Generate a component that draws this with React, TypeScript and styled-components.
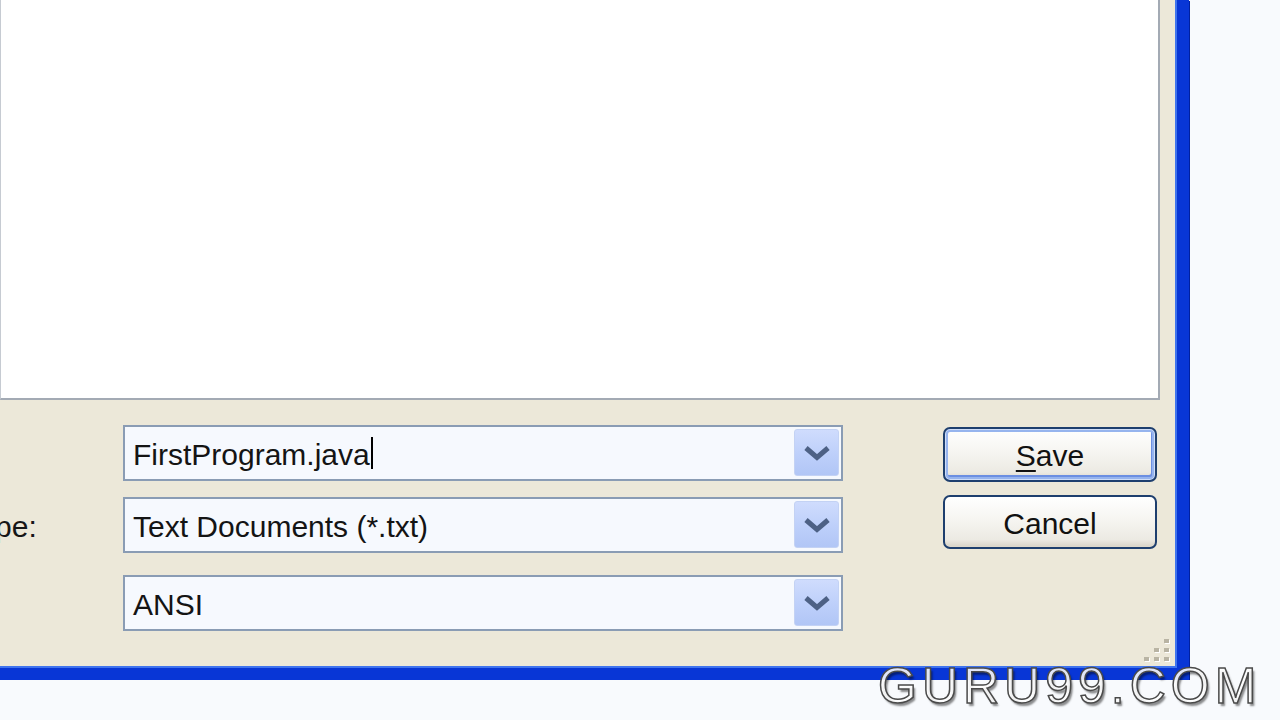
import React from 'react';
import styled, { createGlobalStyle } from 'styled-components';

interface ComboProps {
	value: string;
	caret?: boolean;
}

const Chevron: React.FunctionComponent = () => (
	<svg width={28} height={16} viewBox='0 0 28 16' aria-hidden>
		<path d='M3 3 L14 12.5 L25 3' fill='none' stroke='#4D6185' strokeWidth={5} strokeLinejoin='miter' />
	</svg>
);

const Combo: React.FunctionComponent<ComboProps> = ({ value, caret }) => (
	<ComboBox>
		<ComboText>
			{value}
			{caret && <Caret />}
		</ComboText>
		<DropButton>
			<Chevron />
		</DropButton>
	</ComboBox>
);

const Grip: React.FunctionComponent = () => {
	// bottom-right resize grip, a small staircase of dots
	const dots = [[2, 0], [1, 1], [2, 1], [0, 2], [1, 2], [2, 2]];

	return (
		<GripWrapper>
			<svg width={30} height={26} viewBox='0 0 30 26'>
				{dots.map(([c, r]) => (
					<g key={`${c}-${r}`}>
						<rect x={c * 10 + 3} y={r * 9 + 3} width={5} height={4} fill='#FFFFFF' />
						<rect x={c * 10 + 2} y={r * 9 + 2} width={5} height={4} fill='#B9B4A4' />
					</g>
				))}
			</svg>
		</GripWrapper>
	);
};

const App: React.FunctionComponent = () => (
	<>
		<GlobalStyle />
		<Window>
			<FileList />
			<Form>
				<Label $row={1}>{'File name:'}</Label>
				<ComboCell $row={1}>
					<Combo value='FirstProgram.java' caret />
				</ComboCell>
				<Label $row={2}>{'Save as type:'}</Label>
				<ComboCell $row={2}>
					<Combo value='Text Documents (*.txt)' />
				</ComboCell>
				<Label $row={3}>{'Encoding:'}</Label>
				<ComboCell $row={3} $shift={6}>
					<Combo value='ANSI' />
				</ComboCell>
				<Buttons>
					<Button $default>
						<u>{'S'}</u>
						{'ave'}
					</Button>
					<Button>{'Cancel'}</Button>
				</Buttons>
			</Form>
			<Grip />
		</Window>
		<Watermark>{'GURU99.COM'}</Watermark>
	</>
);

const GlobalStyle = createGlobalStyle`
	html, body {
		margin: 0;
		padding: 0;
		background: #F8FAFD;
		overflow: hidden;
	}

	body {
		font-family: 'Liberation Sans', Arial, sans-serif;
	}
`;

const Window = styled.div`
	position: relative;
	box-sizing: content-box;
	width: 1177px;
	height: 668px;
	background: #ECE8D9;
	border-right: 12px solid #0836D6;
	border-bottom: 12px solid #0836D6;
	box-shadow: 1px 1px 0 #0020A0, inset -2px -2px 0 #3F74EE;
	display: flex;
	flex-direction: column;
`;

const FileList = styled.div`
	box-sizing: border-box;
	width: 1160px;
	height: 400px;
	background: #FFFFFF;
	border-left: 1px solid #C6CBD2;
	border-right: 2px solid #A3AAB4;
	border-bottom: 2px solid #A3AAB4;
`;

const Form = styled.div`
	display: grid;
	grid-template-columns: 123px 720px 100px 214px;
	grid-template-rows: 56px 56px 56px;
	row-gap: 16px;
	padding-top: 25px;
`;

const Label = styled.div<{ $row: number }>`
	grid-column: 1;
	grid-row: ${p => p.$row};
	align-self: center;
	margin-left: -145px;
	padding-top: 3px;
	white-space: nowrap;
	font-size: 30px;
	color: #161616;
`;

const ComboCell = styled.div<{ $row: number; $shift?: number }>`
	grid-column: 2;
	grid-row: ${p => p.$row};
	margin-top: ${p => p.$shift ?? 0}px;
	display: flex;
	align-items: flex-start;
`;

const ComboBox = styled.div`
	flex: 1;
	height: 56px;
	box-sizing: border-box;
	display: flex;
	align-items: stretch;
	border: 2px solid #8A9CB4;
	background: #F6F9FE;
	padding: 2px 2px 3px 8px;
`;

const ComboText = styled.div`
	flex: 1;
	display: flex;
	align-items: center;
	padding-top: 4px;
	font-size: 30px;
	color: #141414;
	white-space: nowrap;
`;

const Caret = styled.span`
	display: inline-block;
	width: 2px;
	height: 32px;
	margin-left: 1px;
	margin-top: -4px;
	background: #000000;
`;

const DropButton = styled.div`
	width: 45px;
	box-sizing: border-box;
	display: flex;
	align-items: center;
	justify-content: center;
	border-radius: 3px;
	border: 1px solid #C3D2F4;
	background: linear-gradient(180deg, #CFDCFD 0%, #BDCFFA 55%, #B1C6F6 100%);
`;

const Buttons = styled.div`
	grid-column: 4;
	grid-row: 1 / span 3;
	display: flex;
	flex-direction: column;
	gap: 13px;
	padding-top: 2px;
`;

const Button = styled.div<{ $default?: boolean }>`
	box-sizing: border-box;
	height: ${p => (p.$default ? 55 : 54)}px;
	display: flex;
	align-items: center;
	justify-content: center;
	padding-top: 3px;
	border: 2px solid #1E3F6E;
	border-radius: 7px;
	font-size: 30px;
	color: #111111;
	background: linear-gradient(180deg, #FFFFFF 0%, #F6F5F1 45%, #ECEAE3 85%, #D8D3C8 100%);
	box-shadow: ${p => (p.$default
		? 'inset 0 0 0 1px #CFDDF8, inset 0 0 0 3px #96B4EE, inset -1px -2px 0 3px #6C8FE2'
		: 'inset 0 -2px 0 #DDD8CC')};

	u {
		text-decoration-thickness: 2px;
		text-underline-offset: 4px;
	}
`;

const GripWrapper = styled.div`
	position: absolute;
	right: 5px;
	bottom: 5px;
	line-height: 0;
`;

const Watermark = styled.div`
	position: absolute;
	left: 878px;
	top: 657px;
	font-family: 'Liberation Sans', Arial, sans-serif;
	font-size: 50px;
	letter-spacing: 5px;
	color: rgba(255, 255, 255, 0.88);
	-webkit-text-stroke: 1.5px #4A4A4A;
	text-shadow: 2px 3px 2px rgba(0, 0, 0, 0.45);
	white-space: nowrap;
`;

export default App;
